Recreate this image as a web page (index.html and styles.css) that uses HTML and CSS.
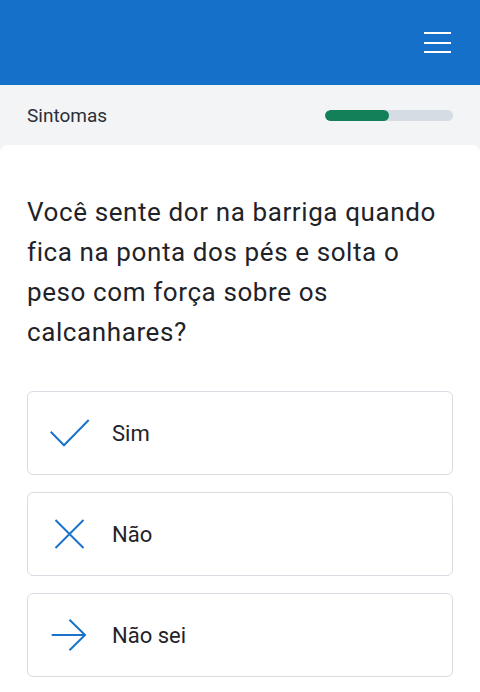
FILE: index.html
```html
<!DOCTYPE html>
<html lang="pt">
<head>
  <meta charset="UTF-8" />
  <meta name="viewport" content="width=device-width, initial-scale=1.0"/>
  <title>Sintomas</title>
  <link rel="stylesheet" href="styles.css">
</head>
<body>

<header class="topbar">
  <button class="menu" aria-label="Menu">
    <span></span><span></span><span></span>
  </button>
</header>

<div class="section">
  <span class="section-name">Sintomas</span>
  <div class="progress"><div class="progress-fill" style="width: 50%"></div></div>
</div>

<main class="card">
  <h1 class="question">Você sente dor na barriga quando fica na ponta dos pés e solta o peso com força sobre os calcanhares?</h1>

  <div class="options">
    <button class="option">
      <svg class="icon" viewBox="0 0 40 32" width="40" height="32">
        <path d="M0.7 14.7 L14 28.3 L38.7 3" fill="none" stroke="#1a73c9" stroke-width="2"/>
      </svg>
      <span>Sim</span>
    </button>
    <button class="option">
      <svg class="icon" viewBox="0 0 40 32" width="40" height="32">
        <path d="M5.5 2 L33.5 30 M33.5 2 L5.5 30" fill="none" stroke="#1a73c9" stroke-width="2"/>
      </svg>
      <span>Não</span>
    </button>
    <button class="option">
      <svg class="icon" viewBox="0 0 40 32" width="40" height="32">
        <path d="M1.7 16 L35 16 M19.5 0.8 L35 16 L19.5 31.2" fill="none" stroke="#1a73c9" stroke-width="2"/>
      </svg>
      <span>Não sei</span>
    </button>
  </div>
</main>

</body>
</html>
```

FILE: styles.css
```css
body {
  font-family: Roboto, "Noto Sans", Arial, sans-serif;
  background: #f3f4f6;
  margin: 0;
  padding: 0;
  color: #1f2328;
}
.topbar {
  background: #1470c8;
  height: 85px;
  display: flex;
  align-items: center;
  justify-content: flex-end;
  padding: 0 29px;
  box-sizing: border-box;
}
.menu {
  background: none;
  border: none;
  padding: 0;
  width: 27px;
  display: flex;
  flex-direction: column;
  gap: 7.5px;
  cursor: pointer;
}
.menu span {
  display: block;
  height: 2px;
  background: #fff;
}
.section {
  height: 60px;
  display: flex;
  align-items: center;
  justify-content: space-between;
  padding: 0 27px;
  box-sizing: border-box;
}
.section-name {
  font-size: 19px;
  color: #2b2f36;
}
.progress {
  width: 128px;
  height: 11px;
  background: #d6dce3;
  border-radius: 6px;
  overflow: hidden;
}
.progress-fill {
  height: 100%;
  background: #13805a;
  border-radius: 6px;
}
.card {
  background: #fff;
  border-radius: 8px 8px 0 0;
  padding: 47px 27px 20px;
  min-height: 480px;
}
.question {
  font-size: 26px;
  font-weight: normal;
  line-height: 40px;
  letter-spacing: 0.6px;
  margin: 0 0 39px;
  color: #1f2328;
}
.options {
  display: flex;
  flex-direction: column;
  gap: 17px;
}
.option {
  display: flex;
  align-items: center;
  gap: 22px;
  height: 84px;
  padding: 0 22px;
  background: #fff;
  border: 1px solid #d9dde3;
  border-radius: 6px;
  font-family: inherit;
  font-size: 22px;
  color: #1f2328;
  text-align: left;
  cursor: pointer;
}
.icon {
  flex: none;
}
```
